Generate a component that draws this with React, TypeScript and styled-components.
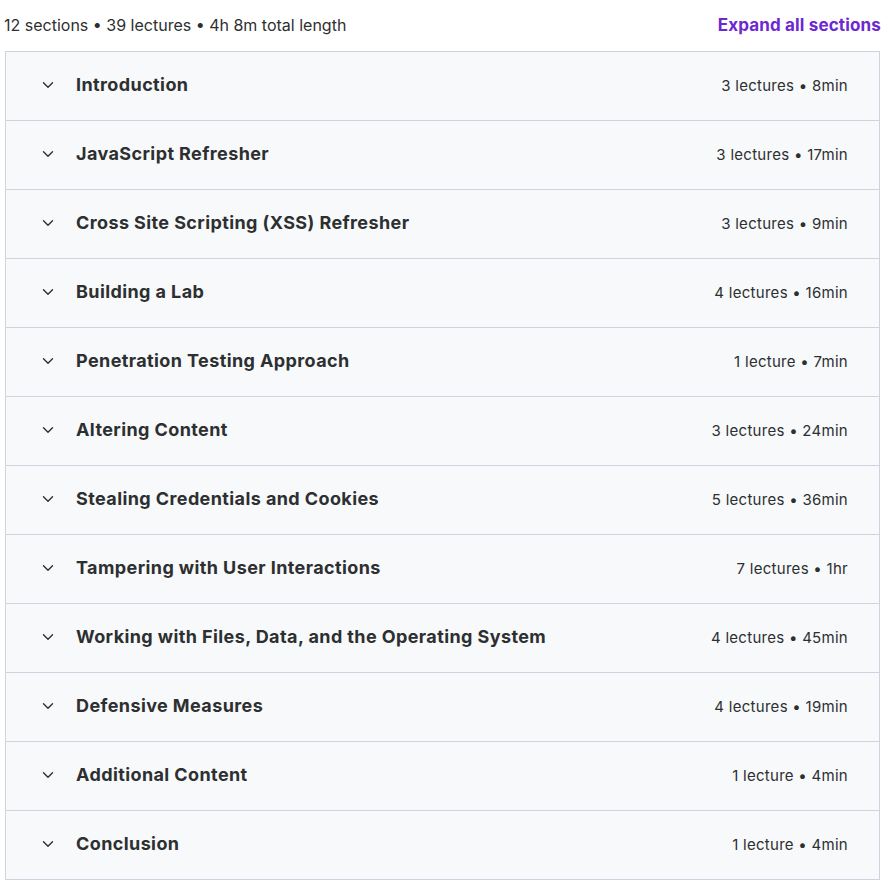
import React from "react";
import styled, { createGlobalStyle } from "styled-components";

const Global = createGlobalStyle`
  html, body { margin: 0; padding: 0; background: #fff; }
  body { font-family: Inter, "Noto Sans", sans-serif; color: #2d2f31; }
`;

const Page = styled.div`
  padding: 0 4px 0 5px;
`;

const Header = styled.div`
  height: 51px;
  display: flex;
  align-items: center;
  justify-content: space-between;
  margin-left: -1px;
  margin-right: -1px;
`;

const Summary = styled.span`
  font-size: 16px;
  color: #2d2f31;
  margin-top: -1px;
`;

const ExpandButton = styled.button`
  border: none;
  background: none;
  padding: 0;
  font-family: inherit;
  font-size: 17px;
  font-weight: 700;
  letter-spacing: 0.15px;
  color: #6d28d2;
  cursor: pointer;
  margin-top: -2px;
`;

const List = styled.div`
  border: 1px solid #d1d2e0;
  border-bottom: none;
`;

const Row = styled.div`
  height: 68px;
  border-bottom: 1px solid #d1d2e0;
  background: #f7f9fa;
  display: flex;
  align-items: center;
  padding: 0 31px 0 34px;
`;

const Chevron = styled.span`
  width: 16px;
  height: 16px;
  display: flex;
  align-items: center;
  justify-content: center;
  margin-right: 20px;
  margin-top: -2px;
  color: #2d2f31;
`;

const Title = styled.span`
  flex: 1;
  font-size: 18px;
  font-weight: 700;
  letter-spacing: 0.4px;
  margin-top: -3px;
`;

const Meta = styled.span`
  font-size: 15px;
  letter-spacing: 0.28px;
  color: #2d2f31;
  margin-top: -2px;
`;

const sections: [string, string][] = [
  ["Introduction", "3 lectures • 8min"],
  ["JavaScript Refresher", "3 lectures • 17min"],
  ["Cross Site Scripting (XSS) Refresher", "3 lectures • 9min"],
  ["Building a Lab", "4 lectures • 16min"],
  ["Penetration Testing Approach", "1 lecture • 7min"],
  ["Altering Content", "3 lectures • 24min"],
  ["Stealing Credentials and Cookies", "5 lectures • 36min"],
  ["Tampering with User Interactions", "7 lectures • 1hr"],
  ["Working with Files, Data, and the Operating System", "4 lectures • 45min"],
  ["Defensive Measures", "4 lectures • 19min"],
  ["Additional Content", "1 lecture • 4min"],
  ["Conclusion", "1 lecture • 4min"],
];

const ChevronIcon = () => (
  <svg width="14" height="14" viewBox="0 0 14 14" fill="none">
    <path d="M2.5 4.8 L7 9.2 L11.5 4.8" stroke="currentColor" strokeWidth="1.4" strokeLinecap="round" strokeLinejoin="round" />
  </svg>
);

export default function App() {
  return (
    <Page>
      <Global />
      <Header>
        <Summary>12 sections • 39 lectures • 4h 8m total length</Summary>
        <ExpandButton>Expand all sections</ExpandButton>
      </Header>
      <List>
        {sections.map(([t, m]) => (
          <Row key={t}>
            <Chevron>
              <ChevronIcon />
            </Chevron>
            <Title>{t}</Title>
            <Meta>{m}</Meta>
          </Row>
        ))}
      </List>
    </Page>
  );
}
